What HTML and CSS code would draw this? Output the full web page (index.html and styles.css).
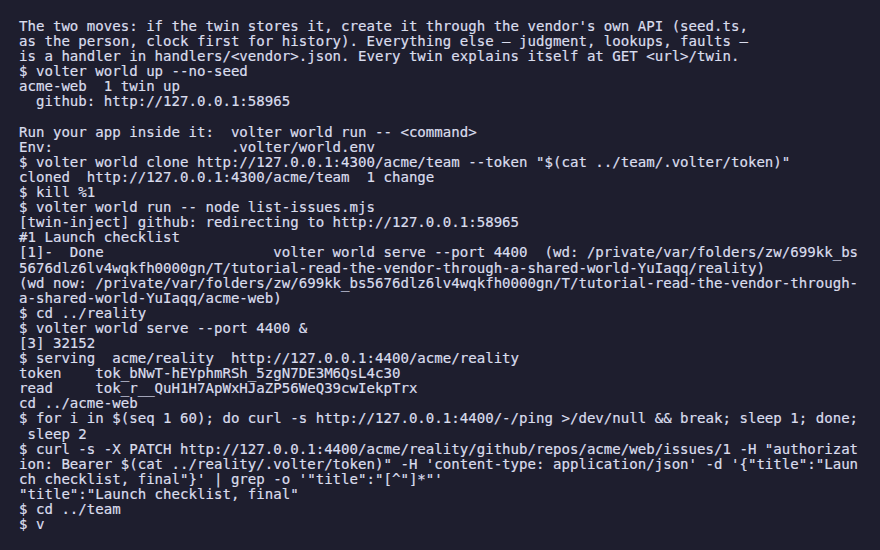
FILE: index.html
```html
<!DOCTYPE html>
<html>
<head>
<meta charset="utf-8">
<link rel="stylesheet" href="styles.css">
</head>
<body>
<main class="terminal">
<pre class="output">The two moves: if the twin stores it, create it through the vendor's own API (seed.ts,
as the person, clock first for history). Everything else — judgment, lookups, faults —
is a handler in handlers/&lt;vendor&gt;.json. Every twin explains itself at GET &lt;url&gt;/twin.
$ volter world up --no-seed
acme-web  1 twin up
  github: http://127.0.0.1:58965

Run your app inside it:  volter world run -- &lt;command&gt;
Env:                     .volter/world.env
$ volter world clone http://127.0.0.1:4300/acme/team --token "$(cat ../team/.volter/token)"
cloned  http://127.0.0.1:4300/acme/team  1 change
$ kill %1
$ volter world run -- node list-issues.mjs
[twin-inject] github: redirecting to http://127.0.0.1:58965
#1 Launch checklist
[1]-  Done                    volter world serve --port 4400  (wd: /private/var/folders/zw/699kk_bs
5676dlz6lv4wqkfh0000gn/T/tutorial-read-the-vendor-through-a-shared-world-YuIaqq/reality)
(wd now: /private/var/folders/zw/699kk_bs5676dlz6lv4wqkfh0000gn/T/tutorial-read-the-vendor-through-
a-shared-world-YuIaqq/acme-web)
$ cd ../reality
$ volter world serve --port 4400 &amp;
[3] 32152
$ serving  acme/reality  http://127.0.0.1:4400/acme/reality
token    tok_bNwT-hEYphmRSh_5zgN7DE3M6QsL4c30
read     tok_r__QuH1H7ApWxHJaZP56WeQ39cwIekpTrx
cd ../acme-web
$ for i in $(seq 1 60); do curl -s http://127.0.0.1:4400/-/ping &gt;/dev/null &amp;&amp; break; sleep 1; done;
 sleep 2
$ curl -s -X PATCH http://127.0.0.1:4400/acme/reality/github/repos/acme/web/issues/1 -H "authorizat
ion: Bearer $(cat ../reality/.volter/token)" -H 'content-type: application/json' -d '{"title":"Laun
ch checklist, final"}' | grep -o '"title":"[^"]*"'
"title":"Launch checklist, final"
$ cd ../team
$ v</pre>
</main>
</body>
</html>
```
FILE: styles.css
```css
html, body {
  margin: 0;
  padding: 0;
  background: #1e1e2e;
  height: 100%;
}
.terminal {
  box-sizing: border-box;
  width: 880px;
  height: 550px;
  padding: 19px 0 0 19px;
  background: #1e1e2e;
  overflow: hidden;
}
.output {
  margin: 0;
  font-family: "DejaVu Sans Mono", "Liberation Mono", monospace;
  font-size: 14.08px;
  line-height: 15.09px;
  color: #dadded;
  -webkit-text-stroke: 0.2px #dadded;
  white-space: pre;
}
```
